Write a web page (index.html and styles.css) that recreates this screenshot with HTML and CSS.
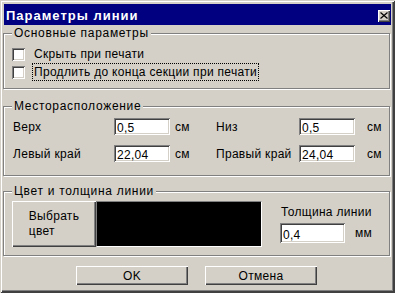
FILE: index.html
```html
<!DOCTYPE html>
<html>
<head>
    <title>Параметры линии</title>
    <link rel="stylesheet" href="styles.css">
</head>
<body>
    <div class="window">
        <div class="title-bar">
            <span class="title-text">Параметры линии</span>
            <span class="close-btn">
                <svg width="8" height="7" viewBox="0 0 8 7">
                    <path d="M0.5 0.5 L7.5 6.5 M7.5 0.5 L0.5 6.5" stroke="#000" stroke-width="1.2" fill="none"/>
                </svg>
            </span>
        </div>
        <div class="dialog-body">
            <fieldset class="group group-main">
                <legend>Основные параметры</legend>
                <label class="check-row">
                    <span class="checkbox"></span>
                    <span class="check-label">Скрыть при печати</span>
                </label>
                <label class="check-row">
                    <span class="checkbox"></span>
                    <span class="check-label focus">Продлить до конца секции при печати</span>
                </label>
            </fieldset>

            <fieldset class="group group-place">
                <legend>Месторасположение</legend>
                <div class="place-grid">
                    <span class="field-label">Верх</span>
                    <input type="text" class="field" value="0,5">
                    <span class="unit">см</span>
                    <span class="field-label">Низ</span>
                    <input type="text" class="field" value="0,5">
                    <span class="unit unit-right">см</span>

                    <span class="field-label">Левый край</span>
                    <input type="text" class="field" value="22,04">
                    <span class="unit">см</span>
                    <span class="field-label">Правый край</span>
                    <input type="text" class="field" value="24,04">
                    <span class="unit unit-right">см</span>
                </div>
            </fieldset>

            <fieldset class="group group-color">
                <legend>Цвет и толщина линии</legend>
                <div class="color-row">
                    <button class="btn color-btn"><span>Выбрать<br>цвет</span></button>
                    <div class="swatch"></div>
                    <div class="width-box">
                        <span class="width-label">Толщина линии</span>
                        <div class="width-input">
                            <input type="text" class="field field-tall" value="0,4">
                            <span class="unit-mm">мм</span>
                        </div>
                    </div>
                </div>
            </fieldset>

            <div class="actions">
                <button class="btn btn-action">OK</button>
                <button class="btn btn-action">Отмена</button>
            </div>
        </div>
    </div>
</body>
</html>
```

FILE: styles.css
```css
:root {
    --face: #d4d0c8;      /* button face grey */
    --shadow: #808080;
    --dark: #404040;
    --light: #ffffff;
    --caption: #000080;
}
body {
    margin: 0;
    font-family: "Liberation Sans", Arial, sans-serif;
    font-size: 12px;
    letter-spacing: 0.3px;
    color: #000;
    background: var(--face);
}
.window {
    width: 395px;
    height: 293px;
    box-sizing: border-box;
    padding-top: 4px;
    background: var(--face);
    box-shadow: inset 1px 1px 0 var(--face), inset -1px -1px 0 var(--dark),
                inset 2px 2px 0 var(--light), inset -2px -2px 0 var(--dark),
                inset -3px -3px 0 var(--shadow);
}
.title-bar {
    display: flex;
    align-items: center;
    justify-content: space-between;
    height: 21px;
    margin: 0 4px;
    padding: 0 1px 0 2px;
    background: var(--caption);
    color: var(--light);
    font-size: 13px;
    font-weight: bold;
    letter-spacing: 1px;
}
.title-text {
    padding-top: 1px;
}
.close-btn {
    display: flex;
    align-items: center;
    justify-content: center;
    width: 12px;
    height: 12px;
    margin-top: 2px;
    background: var(--face);
    box-shadow: inset 1px 1px 0 var(--light), inset -1px -1px 0 var(--dark),
                inset -2px -2px 0 var(--shadow);
}
.dialog-body {
    padding: 2px 5px 0 3px;
}

/* group boxes */
.group {
    margin: 0;
    padding: 5px 8px 7px 8px;
    border: 1px solid var(--shadow);
    box-shadow: inset 1px 1px 0 var(--light), 1px 1px 0 var(--light);
    min-width: 0;
}
.group legend {
    padding: 0 2px;
    line-height: 13px;
    letter-spacing: 0.7px;
    background: var(--face);
}
.group-place {
    margin-top: 11px;
    padding-bottom: 13px;
}
.group-color {
    margin-top: 9px;
    padding-top: 3px;
    padding-bottom: 8px;
}

/* checkboxes */
.check-row {
    display: flex;
    align-items: center;
    height: 18px;
}
.checkbox {
    width: 13px;
    height: 13px;
    margin-right: 7px;
    background: var(--light);
    box-shadow: inset 1px 1px 0 var(--shadow), inset -1px -1px 0 var(--light),
                inset 2px 2px 0 var(--dark), inset -2px -2px 0 var(--face);
}
.check-label {
    display: flex;
    align-items: center;
    box-sizing: border-box;
    height: 18px;
    padding: 0 1px;
    border: 1px solid transparent;
}
.check-label.focus {
    border: 1px dotted #000;
}

/* position fields */
.place-grid {
    display: grid;
    grid-template-columns: 102px 56px 45px 84px 56px auto;
    row-gap: 10px;
    align-items: center;
}
.field-label {
    padding-left: 1px;
    white-space: nowrap;
}
.unit {
    padding-left: 5px;
}
.unit-right {
    padding-left: 12px;
}
.field {
    box-sizing: border-box;
    width: 56px;
    height: 17px;
    margin: 0;
    padding: 3px 1px 0 3px;
    border: 0;
    background: var(--light);
    box-shadow: inset 1px 1px 0 var(--shadow), inset -1px -1px 0 var(--light),
                inset 2px 2px 0 var(--dark), inset -2px -2px 0 var(--face);
    font: inherit;
    letter-spacing: inherit;
    color: #000;
    outline: none;
}

/* colour row */
.color-row {
    display: flex;
    align-items: flex-start;
}
.btn {
    margin: 0;
    padding: 0;
    border: 0;
    background: var(--face);
    box-shadow: inset 1px 1px 0 var(--light), inset -1px -1px 0 var(--dark),
                inset -2px -2px 0 var(--shadow);
    font: inherit;
    letter-spacing: inherit;
    color: #000;
}
.color-btn {
    display: flex;
    align-items: center;
    justify-content: center;
    width: 84px;
    height: 46px;
    line-height: 15px;
    text-align: left;
}
.swatch {
    box-sizing: border-box;
    width: 166px;
    height: 46px;
    background: #000;
    border: 1px solid;
    border-color: var(--shadow) var(--light) var(--light) var(--shadow);
}
.width-box {
    display: flex;
    flex-direction: column;
    margin-left: 18px;
    padding-top: 4px;
}
.width-label {
    padding-left: 1px;
    line-height: 14px;
}
.width-input {
    display: flex;
    align-items: center;
    margin-top: 4px;
}
.field-tall {
    width: 65px;
    height: 20px;
}
.unit-mm {
    margin-left: 10px;
}

/* dialog buttons */
.actions {
    display: flex;
    justify-content: center;
    gap: 17px;
    margin-top: 10px;
}
.btn-action {
    width: 112px;
    height: 19px;
    text-align: center;
}
```
